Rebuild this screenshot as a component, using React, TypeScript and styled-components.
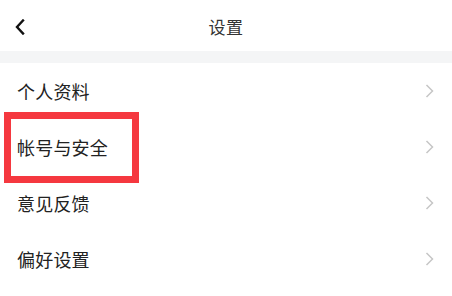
import React from "react";
import styled, { createGlobalStyle } from "styled-components";

const Global = createGlobalStyle`
  html, body { margin: 0; padding: 0; background: #ffffff; }
  body { font-family: "Noto Sans CJK SC", "Noto Sans", sans-serif; }
`;

const Page = styled.div`
  width: 452px;
  height: 296px;
  background: #ffffff;
  display: flex;
  flex-direction: column;
  overflow: hidden;
`;

const Header = styled.div`
  height: 51px;
  display: grid;
  grid-template-columns: 60px 1fr 60px;
  align-items: center;
  background: #ffffff;
`;

const BackButton = styled.div`
  padding-left: 14px;
  display: flex;
  align-items: center;
  height: 100%;
  padding-top: 2px;
`;

const Title = styled.div`
  text-align: center;
  font-size: 17px;
  color: #333333;
  letter-spacing: 0.5px;
  padding-top: 2px;
`;

const Divider = styled.div`
  height: 12px;
  background: #f4f5f6;
`;

const List = styled.div`
  display: flex;
  flex-direction: column;
`;

const Row = styled.div`
  position: relative;
  height: 56px;
  display: flex;
  align-items: center;
  justify-content: space-between;
  padding: 0 18px 0 17px;
`;

const Label = styled.span`
  font-size: 18px;
  color: #222222;
  letter-spacing: 0.2px;
`;

const Highlight = styled.div`
  position: absolute;
  left: 4px;
  top: -7px;
  width: 135px;
  height: 71px;
  box-sizing: border-box;
  border: 7px solid #f5383f;
  pointer-events: none;
`;

const Back = () => (
  <svg width="12" height="16" viewBox="0 0 12 16">
    <path d="M9 1.5 L3 8 L9 14.5" fill="none" stroke="#111" strokeWidth="2.4" strokeLinecap="square" strokeLinejoin="miter" />
  </svg>
);

const Chevron = () => (
  <svg width="9" height="14" viewBox="0 0 9 14">
    <path d="M1.5 1 L7.5 7 L1.5 13" fill="none" stroke="#c6c6c6" strokeWidth="1.5" />
  </svg>
);

const items = ["个人资料", "帐号与安全", "意见反馈", "偏好设置"];

export default function App() {
  return (
    <Page>
      <Global />
      <Header>
        <BackButton>
          <Back />
        </BackButton>
        <Title>设置</Title>
        <div />
      </Header>
      <Divider />
      <List>
        {items.map((t, i) => (
          <Row key={t}>
            <Label>{t}</Label>
            <Chevron />
            {i === 1 && <Highlight />}
          </Row>
        ))}
      </List>
    </Page>
  );
}
